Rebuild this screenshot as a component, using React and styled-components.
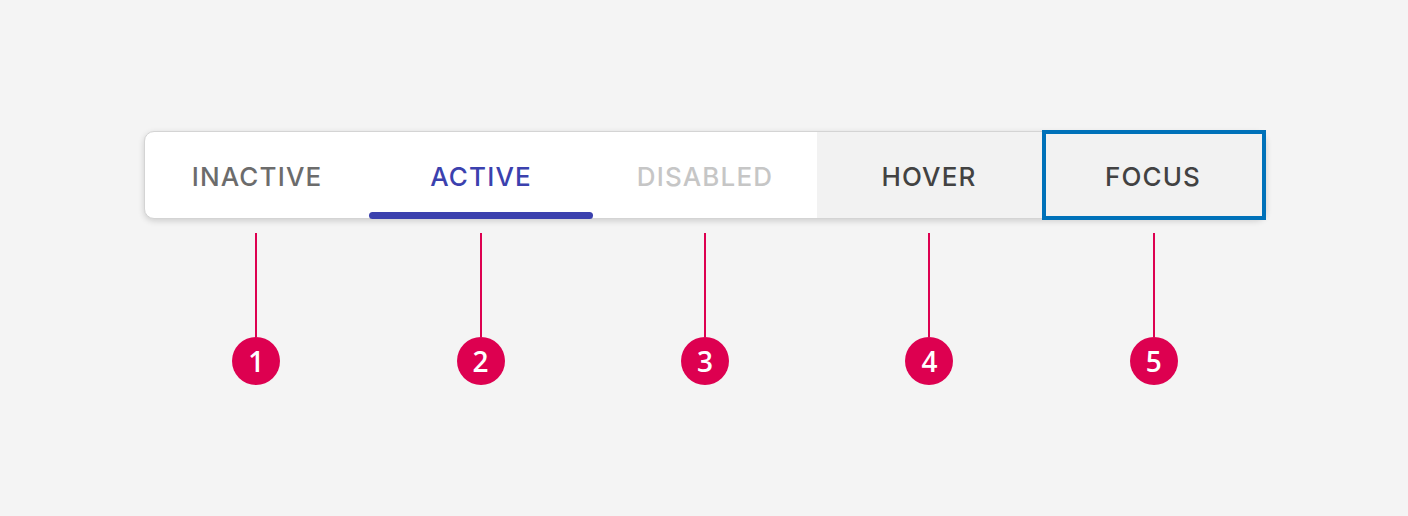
import React from "react";
import styled, { createGlobalStyle } from "styled-components";

const Global = createGlobalStyle`
  html, body { margin: 0; padding: 0; background: #f4f4f4; }
  body { font-family: "Inter", "Liberation Sans", sans-serif; }
`;

const Page = styled.div`
  width: 1408px;
  height: 516px;
  box-sizing: border-box;
  padding: 131px 0 0 144px;
  display: flex;
  flex-direction: column;
  align-items: flex-start;
`;

const TabBar = styled.div`
  width: 1122px;
  height: 88px;
  box-sizing: border-box;
  display: grid;
  grid-template-columns: repeat(5, 1fr);
  background: #ffffff;
  border: 1px solid #d4d4d4;
  border-radius: 10px;
  box-shadow: 0 2px 6px rgba(0, 0, 0, 0.16);
`;

const colors = {
  inactive: "#6c6c6c",
  active: "#3b41ae",
  disabled: "#c6c6c6",
  hover: "#424242",
  focus: "#424242",
};

const Tab = styled.div`
  position: relative;
  display: flex;
  align-items: center;
  justify-content: center;
  font-size: 26px;
  font-weight: 500;
  letter-spacing: 1.15px;
  color: ${(p) => colors[p.$state]};
  background: ${(p) => (p.$state === "hover" || p.$state === "focus" ? "#f2f2f2" : "transparent")};
  border-radius: ${(p) => (p.$last ? "0 9px 9px 0" : "0")};
  padding-top: 3px;

  ${(p) =>
    p.$state === "focus" &&
    `
    &::after {
      content: "";
      position: absolute;
      top: -2px;
      bottom: -2px;
      left: 1px;
      right: -1px;
      border: 4px solid #0071b9;
    }
  `}
`;

const Indicator = styled.span`
  position: absolute;
  left: 0;
  right: 0;
  bottom: -1px;
  height: 7px;
  border-radius: 4px;
  background: #3b41ae;
`;

const Annotations = styled.div`
  width: 1122px;
  display: grid;
  grid-template-columns: repeat(5, 1fr);
  padding-top: 14px;
`;

const Callout = styled.div`
  display: flex;
  flex-direction: column;
  align-items: center;
`;

const Line = styled.div`
  width: 2px;
  height: 104px;
  background: #dd0050;
`;

const Badge = styled.div`
  width: 48px;
  height: 48px;
  border-radius: 50%;
  background: #dd0050;
  color: #ffffff;
  display: flex;
  align-items: center;
  justify-content: center;
  font-family: "Open Sans", "Noto Sans", sans-serif;
  font-weight: 600;
  font-size: 28px;
  line-height: 1;
`;

const tabs = [
  { label: "INACTIVE", state: "inactive" },
  { label: "ACTIVE", state: "active" },
  { label: "DISABLED", state: "disabled" },
  { label: "HOVER", state: "hover" },
  { label: "FOCUS", state: "focus" },
];

export default function App() {
  return (
    <>
      <Global />
      <Page>
        <TabBar>
          {tabs.map((t, i) => (
            <Tab key={t.label} $state={t.state} $last={i === tabs.length - 1}>
              {t.label}
              {t.state === "active" && <Indicator />}
            </Tab>
          ))}
        </TabBar>
        <Annotations>
          {tabs.map((t, i) => (
            <Callout key={t.label}>
              <Line />
              <Badge>{i + 1}</Badge>
            </Callout>
          ))}
        </Annotations>
      </Page>
    </>
  );
}
